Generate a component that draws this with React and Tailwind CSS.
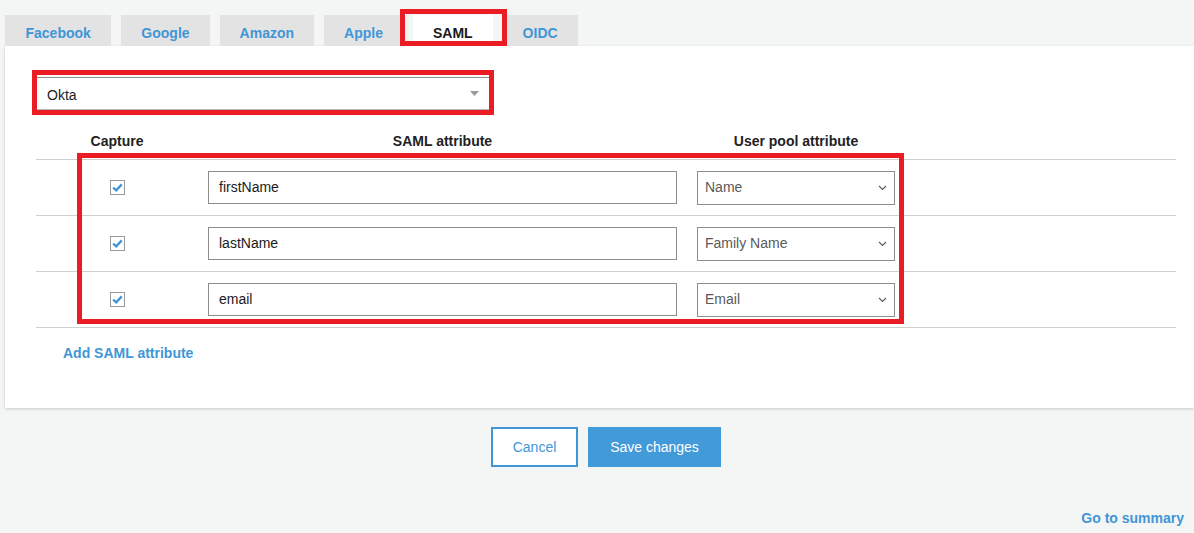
import React from "react";

const tabs = ["Facebook", "Google", "Amazon", "Apple", "SAML", "OIDC"];

const rows = [
  { saml: "firstName", pool: "Name" },
  { saml: "lastName", pool: "Family Name" },
  { saml: "email", pool: "Email" },
];

function Check() {
  return (
    <div className="w-[15px] h-[15px] border border-[#9a9a9a] bg-white flex items-center justify-center">
      <svg width="11" height="9" viewBox="0 0 11 9">
        <path d="M1.2 4.6 L4.2 7.4 L9.8 1.4" fill="none" stroke="#3f97d6" strokeWidth="2.3" />
      </svg>
    </div>
  );
}

export default function App() {
  return (
    <div className="min-h-[533px] bg-[#f4f5f5] font-['Liberation_Sans',Arial,sans-serif] text-[14px] text-[#222]">
      <div className="pt-[15px] pl-[5px]">
        <div className="flex gap-[10px]">
          {tabs.map((t) =>
            t === "SAML" ? (
              <div key={t} className="relative">
                <div className="h-[31px] pt-[5px] px-5 flex items-center bg-white font-bold text-[#1a1a1a]">
                  {t}
                </div>
                <div className="absolute left-[-13px] right-[-14px] top-[-6px] bottom-0 border-[5px] border-[#ec1c24] pointer-events-none" />
              </div>
            ) : (
              <div key={t} className={`h-[31px] pt-[5px] ${t === "Facebook" ? "px-[20.5px]" : "px-5"} flex items-center bg-[#e4e3e4] font-bold text-[#3f96d6]`}>
                {t}
              </div>
            )
          )}
        </div>
        <div className="bg-white shadow-[0_1px_3px_rgba(0,0,0,0.18)] pt-[31px] pl-[31px] pr-[18px] pb-[47px]">
          <div className="relative w-[454px]">
            <div className="h-[33px] border border-[#b5b5b5] border-t-[#8f8f8f] flex items-center justify-between pl-[10px] pr-[10px] pt-[3px]">
              <span>Okta</span>
              <svg width="9" height="5" viewBox="0 0 9 5" className="mb-[3px]">
                <path d="M0 0 L9 0 L4.5 5 Z" fill="#9a9a9a" />
              </svg>
            </div>
            <div className="absolute left-[-4px] right-[-4px] top-[-7px] bottom-[-5px] border-[5px] border-[#ec1c24] pointer-events-none" />
          </div>

          <div className="relative">
            <div className="grid grid-cols-[162px_489px_218px_1fr] h-[50px] border-b border-[#cfcfcf] items-end pb-[10px] font-bold">
              <div className="text-center leading-4">Capture</div>
              <div className="text-center leading-4">SAML attribute</div>
              <div className="text-center leading-4">User pool attribute</div>
              <div />
            </div>
            {rows.map((r) => (
              <div key={r.saml} className="grid grid-cols-[162px_489px_218px_1fr] h-[56px] border-b border-[#cfcfcf] items-center">
                <div className="flex justify-center">
                  <Check />
                </div>
                <div className="px-[10px]">
                  <div className="h-[33px] border border-[#8e8e8e] flex items-center pl-[10px] text-[#1a1a1a]">
                    {r.saml}
                  </div>
                </div>
                <div className="px-[10px]">
                  <div className="h-[34px] border border-[#8e8e8e] flex items-center justify-between pl-[7px] pr-[7px] text-[#5a5a5a]">
                    <span>{r.pool}</span>
                    <svg width="9" height="6" viewBox="0 0 9 6">
                      <path d="M1 1 L4.5 4.5 L8 1" fill="none" stroke="#5a5a5a" strokeWidth="1.2" />
                    </svg>
                  </div>
                </div>
                <div />
              </div>
            ))}
            <div className="absolute left-[41px] top-[43px] w-[827px] h-[171px] border-[5px] border-[#ec1c24] pointer-events-none" />
          </div>

          <div className="mt-[17px] ml-[27px] leading-4 font-bold text-[#3f96d6]">Add SAML attribute</div>
        </div>
      </div>

      <div className="mt-[19px] flex justify-center gap-[10px] pl-[18px]">
        <button className="w-[87px] h-[40px] border-2 border-[#3f97d6] bg-white text-[#3f96d6]">Cancel</button>
        <button className="w-[133px] h-[40px] bg-[#429ad8] text-white">Save changes</button>
      </div>

      <div className="mt-[43px] pr-[10px] flex justify-end">
        <span className="leading-4 font-bold text-[#3f96d6]">Go to summary</span>
      </div>
    </div>
  );
}
